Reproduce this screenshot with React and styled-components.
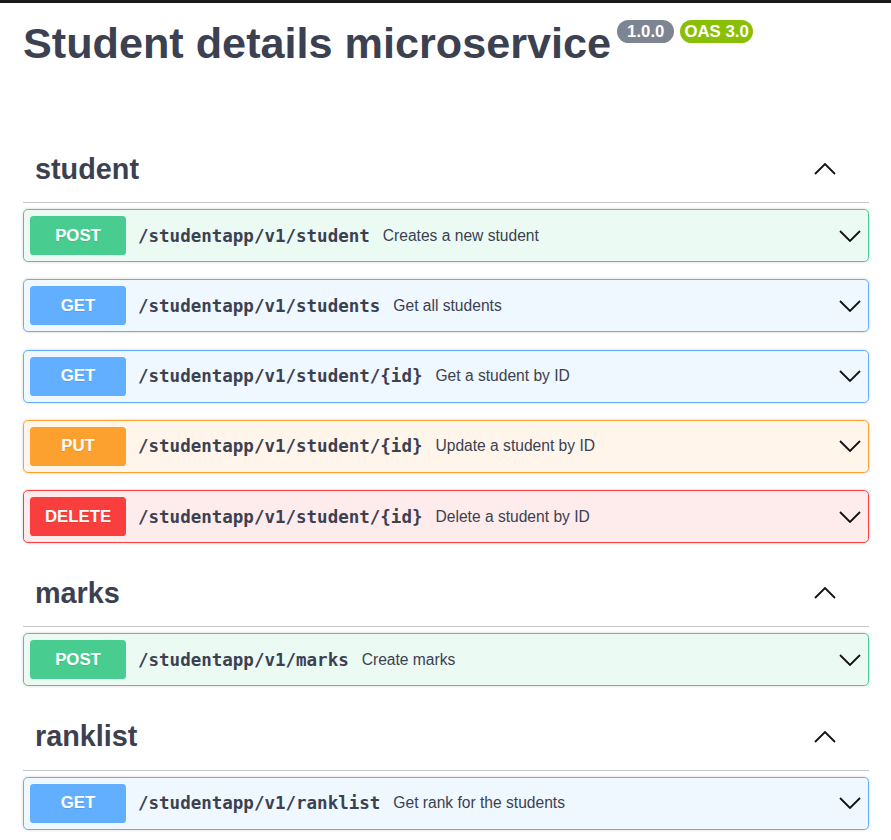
import React from "react";
import styled, { createGlobalStyle } from "styled-components";

const GlobalStyle = createGlobalStyle`
  * { box-sizing: border-box; }
  html { overflow: hidden; }
  body {
    margin: 0;
    background: #fff;
    font-family: "Liberation Sans", Arial, sans-serif;
    color: #3b4151;
  }
`;

const METHODS = {
  POST: { color: "#49cc90", bg: "rgba(73, 204, 144, 0.1)" },
  GET: { color: "#61affe", bg: "rgba(97, 175, 254, 0.1)" },
  PUT: { color: "#fca130", bg: "rgba(252, 161, 48, 0.1)" },
  DELETE: { color: "#f93e3e", bg: "rgba(249, 62, 62, 0.1)" },
};

const sections = [
  {
    name: "student",
    ops: [
      { method: "POST", path: "/studentapp/v1/student", summary: "Creates a new student" },
      { method: "GET", path: "/studentapp/v1/students", summary: "Get all students" },
      { method: "GET", path: "/studentapp/v1/student/{id}", summary: "Get a student by ID" },
      { method: "PUT", path: "/studentapp/v1/student/{id}", summary: "Update a student by ID" },
      { method: "DELETE", path: "/studentapp/v1/student/{id}", summary: "Delete a student by ID" },
    ],
  },
  {
    name: "marks",
    ops: [{ method: "POST", path: "/studentapp/v1/marks", summary: "Create marks" }],
  },
  {
    name: "ranklist",
    ops: [{ method: "GET", path: "/studentapp/v1/ranklist", summary: "Get rank for the students" }],
  },
];

const TopBar = styled.div`
  height: 3px;
  background: #1b1b1b;
`;

const Wrapper = styled.div`
  padding: 0 22px 0 23px;
`;

const TitleRow = styled.div`
  display: flex;
  align-items: flex-start;
  padding-top: 14px;
  margin-bottom: 67px;
`;

const Title = styled.h2`
  margin: 0;
  font-size: 43.2px;
  line-height: 52px;
  font-weight: 700;
  color: #3b4151;
`;

const Badge = styled.span`
  display: inline-block;
  margin: 3px 0 0 6px;
  padding: 2px ${({ $pad }) => $pad}px;
  border-radius: 57px;
  background: ${({ $bg }) => $bg};
  color: #fff;
  font-size: 16.8px;
  font-weight: 700;
  line-height: 19px;
`;

const TagHeader = styled.div`
  display: flex;
  align-items: center;
  justify-content: space-between;
  height: 67px;
  padding: 0 32px 0 12px;
  border-bottom: 1px solid rgba(59, 65, 81, 0.3);
  margin-bottom: 6px;
`;

const TagName = styled.h3`
  margin: 0;
  font-size: 28.8px;
  font-weight: 700;
  color: #3b4151;
`;

const Op = styled.div`
  display: flex;
  align-items: center;
  height: 53px;
  padding: 0 6px;
  margin-bottom: 17.25px;
  border: 1px solid ${({ $m }) => METHODS[$m].color};
  border-radius: 4.8px;
  background: ${({ $m }) => METHODS[$m].bg};
  box-shadow: 0 0 3px rgba(0, 0, 0, 0.19);
`;

const Method = styled.span`
  flex: none;
  width: 96px;
  height: 39px;
  display: flex;
  align-items: center;
  justify-content: center;
  border-radius: 3.6px;
  background: ${({ $m }) => METHODS[$m].color};
  color: #fff;
  font-size: 16.8px;
  font-weight: 700;
  text-shadow: 0 1px 0 rgba(0, 0, 0, 0.1);
`;

const Path = styled.span`
  padding: 0 13px 0 12px;
  font-family: "DejaVu Sans Mono", "Liberation Mono", monospace;
  font-size: 17.5px;
  font-weight: 700;
  color: #3b4151;
`;

const Summary = styled.span`
  flex: 1;
  font-size: 15.6px;
  color: #3b4151;
`;

const Chevron = ({ up }) => (
  <svg width="22" height="12" viewBox="0 0 22 12" style={{ flex: "none", marginRight: 1 }}>
    <polyline
      points={up ? "1,11 11,1 21,11" : "1,1 11,11 21,1"}
      fill="none"
      stroke="#111"
      strokeWidth="1.8"
    />
  </svg>
);

export default function App() {
  return (
    <>
      <GlobalStyle />
      <TopBar />
      <Wrapper>
        <TitleRow>
          <Title>Student details microservice</Title>
          <Badge $bg="#7d8492" $pad={10}>1.0.0</Badge>
          <Badge $bg="#89bf04" $pad={4}>OAS 3.0</Badge>
        </TitleRow>
        {sections.map((s) => (
          <section key={s.name}>
            <TagHeader>
              <TagName>{s.name}</TagName>
              <Chevron up />
            </TagHeader>
            {s.ops.map((op, i) => (
              <Op key={i} $m={op.method}>
                <Method $m={op.method}>{op.method}</Method>
                <Path>{op.path}</Path>
                <Summary>{op.summary}</Summary>
                <Chevron />
              </Op>
            ))}
          </section>
        ))}
      </Wrapper>
    </>
  );
}
